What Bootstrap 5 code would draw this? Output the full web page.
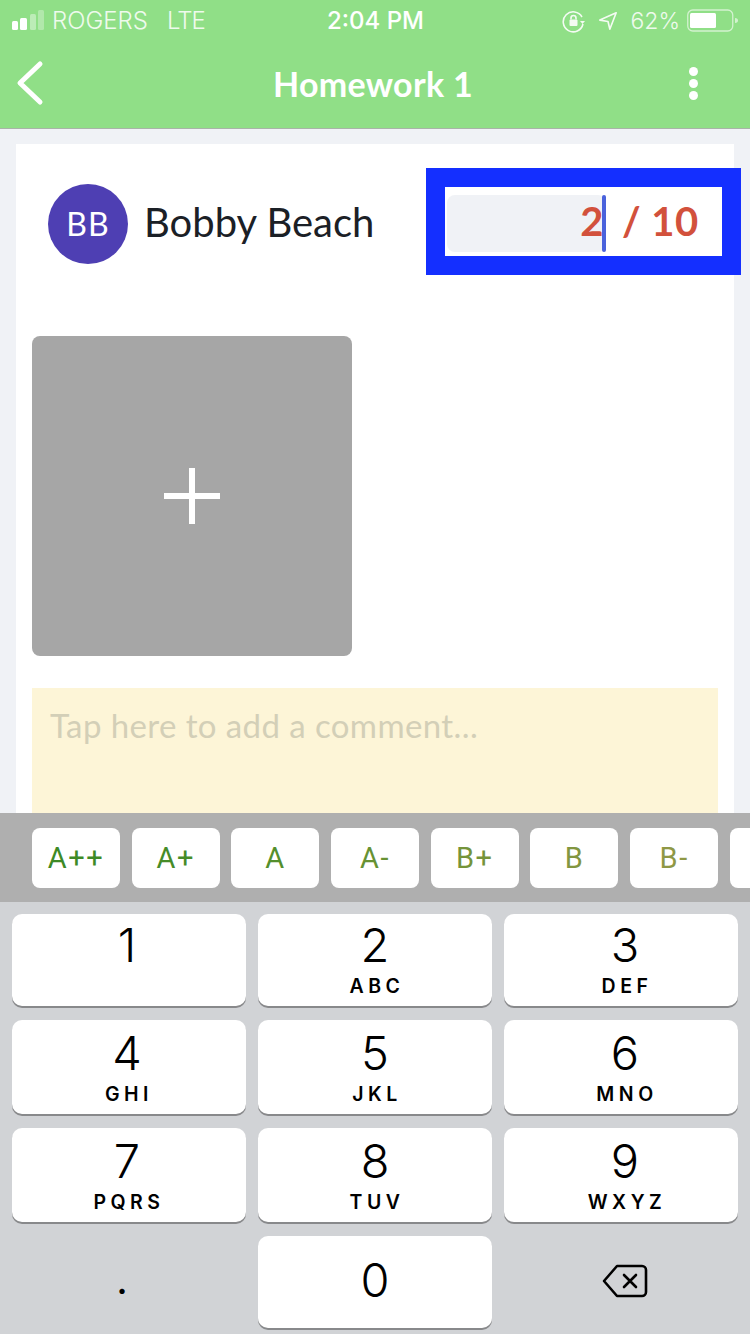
<!DOCTYPE html>
<html lang="en">
  <head>
    <meta charset="UTF-8" />
    <meta name="viewport" content="width=device-width, initial-scale=1.0" />
    <title>Homework 1</title>
    <link href="https://cdn.jsdelivr.net/npm/bootstrap@5.3.0/dist/css/bootstrap.min.css" rel="stylesheet" />
    <style>
      html, body { height: 1334px; overflow: hidden; }
      body { background: #f0f2f6; font-family: Lato, "Liberation Sans", sans-serif; color: #1b2026; width: 750px; }
      .phone-top { background: #90df87; height: 129px; border-bottom: 1px solid #a9b4a8; color: #fff; }
      .status-row { height: 42px; padding: 0 11px 0 12px; font-family: Inter, "Liberation Sans", sans-serif; font-size: 24px; font-weight: 300; }
      .status-side { width: 270px; }
      .status-time { font-weight: 500; font-size: 24px; }
      .status-lte { margin-left: 19px; letter-spacing: -1px; }
      .status-pct { font-size: 23px; margin-left: 12px; }
      .arrow-gap { margin-left: 12px; }
      .battery-gap { margin-left: 7px; }
      .dim-text { opacity: .85; }
      .title-row { height: 86px; padding: 0 16px 4px; }
      .screen-title { font-size: 34px; font-weight: 700; letter-spacing: .3px; margin-right: 4px; }
      .head-side { width: 60px; }
      .dots-side { padding-right: 36px; }
      .dot-stack { gap: 3px; width: 9px; }
      .dot-stack i { width: 9px; height: 9px; border-radius: 50%; background: #fff; display: block; }
      .paper { background: #fff; margin: 15px 16px 0; height: 700px; padding: 40px 16px 0; position: relative; }
      .student-row { height: 80px; padding-left: 16px; }
      .avatar-round { width: 80px; height: 80px; border-radius: 50%; background: #4e3fb3; color: #fff; font-size: 32px; letter-spacing: 1px; }
      .student-name { font-size: 40px; margin-left: 16px; line-height: 1; margin-bottom: 4px; }
      .score-frame { position: absolute; left: 410px; top: 24px; width: 315px; height: 107px; border: 19px solid #142fff; background: #fff; }
      .score-input { width: 159px; height: 57px; margin: 8px 0 0 2px; background: #f0f2f6; border-radius: 8px; }
      .score-text { font-size: 40px; font-weight: 700; color: #d2513c; line-height: 1; margin-bottom: 5px; letter-spacing: .5px; }
      .score-caret { width: 4px; height: 57px; background: #4a62dc; border-radius: 2px; margin-left: -2px; }
      .score-rest { margin: 8px 0 0 16px; height: 57px; }
      .photo-add { width: 320px; height: 320px; margin-top: 72px; background: #a6a6a6; border-radius: 8px; }
      .comment-box { height: 130px; margin-top: 32px; background: #fdf5d7; padding: 16px 18px; font-size: 33px; line-height: 42px; color: #d3cfb7; letter-spacing: .4px; }
      .keyboard-wrap { position: fixed; left: 0; right: 0; top: 813px; width: 750px; }
      .grade-strip { height: 89px; background: #afafaf; padding: 15px 0 0 32px; gap: 11.7px; overflow: hidden; }
      .grade-chip { flex: 0 0 88px; height: 60px; background: #fff; border-radius: 8px; font-family: Roboto, sans-serif; font-size: 29px; letter-spacing: 1.5px; padding-top: 2px; }
      .keypad { height: 432px; background: #d1d3d6; padding: 12px 12px 0; display: grid; grid-template-columns: repeat(3, 234px); grid-template-rows: 92px 94px 94px 92px; column-gap: 12px; row-gap: 14px; font-family: Inter, "Liberation Sans", sans-serif; color: #000; }
      .keypad-btn { background: #fff; border-radius: 10px; box-shadow: 0 2px 0 #88898b; text-align: center; }
      .keypad > :nth-child(3n) { padding-left: 8px; }
      .keypad > :nth-child(3n+1) { padding-right: 4px; }
      .keypad > :nth-child(n+4):nth-child(-n+9) { padding-top: 2px; }
      .key-num { font-size: 47px; font-weight: 300; line-height: 56px; display: block; padding-top: 3px; }
      .key-zero { padding: 0 0 4px; }
      .key-abc { font-size: 19.5px; font-weight: 600; letter-spacing: 4.5px; text-indent: 4px; line-height: 22px; display: block; margin-top: 2px; }
      .keypad > .dot-cell { padding-right: 14px; padding-bottom: 4px; }
      .dot-key { font-size: 40px; line-height: 1; }
      .keypad > .back-cell { padding-bottom: 2px; }
    </style>
  </head>
  <body>
    <div class="phone-top">
      <div class="status-row d-flex align-items-center justify-content-between">
        <div class="status-side d-flex align-items-center">
          <svg width="36" height="24" viewBox="0 0 36 24" fill="#fff"><rect x="0" y="12" width="6" height="9" rx="1.5"/><rect x="8" y="9" width="7" height="12" rx="1.5"/><rect x="18" y="5" width="6" height="16" rx="1.5" opacity=".4"/><rect x="26" y="1" width="6" height="20" rx="1.5" opacity=".3"/></svg>
          <span class="dim-text ms-1">ROGERS</span><span class="dim-text status-lte">LTE</span>
        </div>
        <span class="status-time">2:04 PM</span>
        <div class="status-side d-flex align-items-center justify-content-end">
          <svg width="24" height="24" viewBox="0 0 24 24" fill="none" stroke="#fff" stroke-width="1.6" opacity=".9"><path d="M20 8A10 10 0 1 0 21 15"/><path d="M18 12h5l-2.5 3z" fill="#fff" stroke="none"/><rect x="7.5" y="10.5" width="8" height="6.5" rx="1" fill="#fff" stroke="none"/><path d="M9 10.5V9a2.5 2.5 0 0 1 5 0v1.5"/></svg>
          <svg class="arrow-gap" width="20" height="20" viewBox="0 0 22 22" fill="none" stroke="#fff" stroke-width="1.8" stroke-linejoin="round" opacity=".9"><path d="M20 2 2 10l9 1.5L13 20z"/></svg>
          <span class="dim-text status-pct">62%</span>
          <svg class="battery-gap" width="52" height="24" viewBox="0 0 52 24" fill="none"><rect x=".75" y="1" width="45" height="21" rx="5" stroke="#fff" stroke-width="1.3" opacity=".6"/><rect x="3" y="4" width="26" height="15" rx="1.5" fill="#fff"/><path d="M48 9c2 0 3 1 3 2.5S50 14 48 14z" fill="#fff" opacity=".6"/></svg>
        </div>
      </div>
      <div class="title-row d-flex align-items-center justify-content-between">
        <div class="head-side">
          <svg width="28" height="46" viewBox="0 0 28 46" fill="none" stroke="#fff" stroke-width="5" stroke-linecap="round" stroke-linejoin="round"><path d="M24 4 4 23l20 19"/></svg>
        </div>
        <div class="screen-title">Homework 1</div>
        <div class="head-side dots-side d-flex justify-content-end">
          <div class="dot-stack d-flex flex-column"><i></i><i></i><i></i></div>
        </div>
      </div>
    </div>

    <div class="paper">
      <div class="student-row d-flex align-items-center">
        <div class="avatar-round d-flex align-items-center justify-content-center">BB</div>
        <div class="student-name">Bobby Beach</div>
      </div>
      <div class="score-frame d-flex">
        <div class="score-input d-flex align-items-center justify-content-end">
          <span class="score-text">2</span>
          <div class="score-caret"></div>
        </div>
        <div class="score-rest d-flex align-items-center"><span class="score-text">/ 10</span></div>
      </div>
      <div class="photo-add d-flex align-items-center justify-content-center">
        <svg width="56" height="56" viewBox="0 0 56 56" fill="#fff"><rect x="25" y="0" width="6" height="56"/><rect x="0" y="25" width="56" height="6"/></svg>
      </div>
      <div class="comment-box">Tap here to add a comment...</div>
    </div>

    <div class="keyboard-wrap">
      <div class="grade-strip d-flex">
        <div class="grade-chip d-flex align-items-center justify-content-center" style="color: #3d8a26">A++</div>
        <div class="grade-chip d-flex align-items-center justify-content-center" style="color: #468c28">A+</div>
        <div class="grade-chip d-flex align-items-center justify-content-center" style="color: #548f2c">A</div>
        <div class="grade-chip d-flex align-items-center justify-content-center" style="color: #679233">A-</div>
        <div class="grade-chip d-flex align-items-center justify-content-center" style="color: #75943a">B+</div>
        <div class="grade-chip d-flex align-items-center justify-content-center" style="color: #829640">B</div>
        <div class="grade-chip d-flex align-items-center justify-content-center" style="color: #8f9845">B-</div>
        <div class="grade-chip"></div>
      </div>
      <div class="keypad">
        <div class="keypad-btn"><span class="key-num">1</span></div>
        <div class="keypad-btn"><span class="key-num">2</span><span class="key-abc">ABC</span></div>
        <div class="keypad-btn"><span class="key-num">3</span><span class="key-abc">DEF</span></div>
        <div class="keypad-btn"><span class="key-num">4</span><span class="key-abc">GHI</span></div>
        <div class="keypad-btn"><span class="key-num">5</span><span class="key-abc">JKL</span></div>
        <div class="keypad-btn"><span class="key-num">6</span><span class="key-abc">MNO</span></div>
        <div class="keypad-btn"><span class="key-num">7</span><span class="key-abc">PQRS</span></div>
        <div class="keypad-btn"><span class="key-num">8</span><span class="key-abc">TUV</span></div>
        <div class="keypad-btn"><span class="key-num">9</span><span class="key-abc">WXYZ</span></div>
        <div class="dot-cell d-flex align-items-center justify-content-center"><span class="dot-key">.</span></div>
        <div class="keypad-btn d-flex align-items-center justify-content-center"><span class="key-num key-zero">0</span></div>
        <div class="back-cell d-flex align-items-center justify-content-center">
          <svg width="46" height="34" viewBox="0 0 46 34" fill="none" stroke="#000" stroke-width="2.6" stroke-linejoin="round" stroke-linecap="round"><path d="M15 2h25a4 4 0 0 1 4 4v22a4 4 0 0 1-4 4H15L2 17z"/><path d="m22 11 12 12M34 11 22 23"/></svg>
        </div>
      </div>
    </div>
  </body>
</html>
